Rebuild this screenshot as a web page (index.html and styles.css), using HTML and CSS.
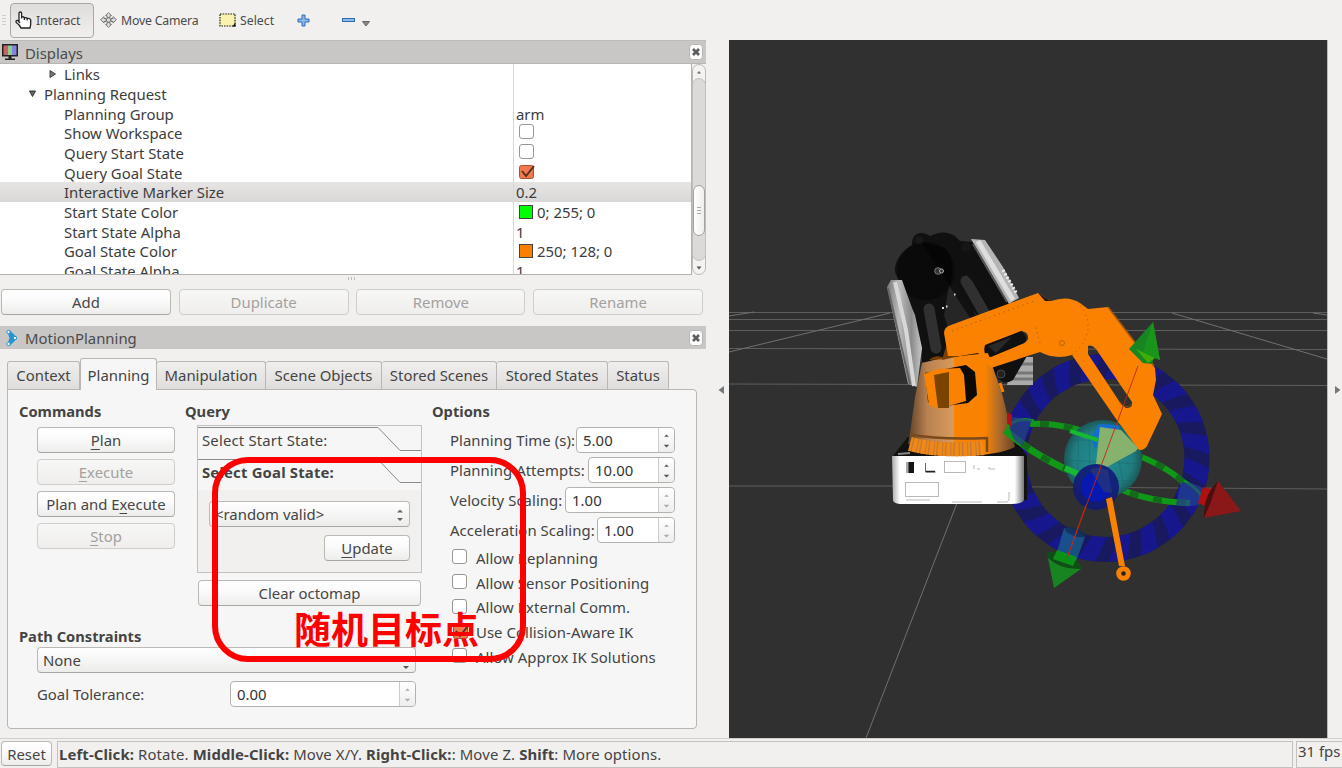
FILE: index.html
```html
<!DOCTYPE html>
<html lang="en">
<head>
<meta charset="utf-8">
<title>RViz MotionPlanning</title>
<link rel="stylesheet" href="styles.css">
</head>
<body>
<svg width="0" height="0" class="defs">
  <defs>
    <symbol id="check" viewBox="0 0 18 16"><rect x="1.500" y="1.500" width="14" height="13" rx="2" fill="#f07a50" stroke="#a8502f"/><path d="M4 7l4 5L16 2" fill="none" stroke="#5b2e1e" stroke-width="2"/></symbol>
    <symbol id="close" viewBox="0 0 14 16"><rect x=".5" y=".5" width="13" height="15" rx="3" fill="#fafafa" stroke="#b5b5b5"/><path d="M4 5l6 6M10 5l-6 6" stroke="#5c5c5c" stroke-width="2.600"/></symbol>
    <symbol id="updown" viewBox="0 0 14 24"><path d="M4.500 8.500L7 6l2.500 2.500zM4 17h6L7 20z" fill="currentColor"/></symbol>
  </defs>
</svg>
<div class="app">
  <header class="toolbar">
    <span class="grip"></span>
    <div class="tool active"><svg width="17" height="18" viewBox="0 0 17 18"><path d="M4 10.500V2.300a1.300 1.300 0 0 1 2.600 0V7.500V6q2.200-.8 2.800.8q2.200-.6 2.800.6q3-.4 3.500 1.600V13.500L15 17H6Q5 14 1.200 11.500Q.5 9 2.700 9.500L5 12M9.400 6.800V9M12.200 7.500V9.500" fill="#fff" stroke="#222" stroke-width="1.300"/></svg><span>Interact</span></div>
    <div class="tool camera"><svg width="17" height="16" viewBox="0 0 17 16"><g fill="#ddd" stroke="#777"><path d="M8.500 .7l3 3H10v2H7v-2H5.500zM8.500 15.300l-3-3H7v-2h3v2h1.500zM.6 7.500L4 4.700V6.500h2v3H4v1.600zM16.400 7.500L13 4.700V6.500h-2v3h2v1.600z"/><circle cx="8.500" cy="8" r="2.200"/></g></svg><span>Move Camera</span></div>
    <div class="tool select"><svg width="17" height="14" viewBox="0 0 17 14"><rect x="1" y="1" width="15" height="12" fill="#faf3ae" stroke="#222" stroke-width="1.200" stroke-dasharray="1.600 1"/><path d="M16.500 10v3.500H13z"/></svg><span>Select</span></div>
    <svg class="plus" width="13" height="13" viewBox="0 0 13 13"><path d="M5 1h3v4h4v3H8v4H5V8H1V5h4z" fill="#8db8ea" stroke="#2f6cb0"/></svg>
    <svg class="minus" width="28" height="13" viewBox="0 0 28 13"><rect x=".5" y="4.500" width="12" height="3" fill="#8db8ea" stroke="#2f6cb0"/><path d="M20.500 7.500h7l-3.500 4.500z" fill="#888" stroke="#666"/></svg>
  </header>
  <div class="main">
    <aside class="left">
      <div class="dock-title"><svg class="dicon" width="18" height="18" viewBox="0 0 18 18"><rect x="1" y="1" width="16" height="12.500" fill="#222"/><path d="M2.500 2.500h4.500v9.500H2.500z" fill="#c86464"/><path d="M7 2.500h4v9.500H7z" fill="#8ad08a"/><path d="M11 2.500h4.500v9.500H11z" fill="#8383e0"/><path d="M7.500 13h3v2.500h3.500v1.500H4v-1.500h3.500z" fill="#222"/></svg><span>Displays</span><svg class="x" width="14" height="16"><use href="#close"/></svg></div>
      <div class="tree-wrap">
        <div class="tree">
          <div class="row"><span class="k d2"><svg class="tri" width="8" height="10"><path d="M1 1.500L6.500 5L1 8.500z" fill="#777" stroke="#444"/></svg>Links</span><span class="v"></span></div>
          <div class="row"><span class="k d1"><svg class="tri t2" width="10" height="8"><path d="M1.500 1h6L4.500 6.500z" fill="#666" stroke="#333"/></svg>Planning Request</span><span class="v"></span></div>
          <div class="row"><span class="k d2">Planning Group</span><span class="v">arm</span></div>
          <div class="row"><span class="k d2">Show Workspace</span><span class="v"><i class="cb"></i></span></div>
          <div class="row"><span class="k d2">Query Start State</span><span class="v"><i class="cb"></i></span></div>
          <div class="row"><span class="k d2">Query Goal State</span><span class="v"><svg class="ck" width="18" height="16"><use href="#check"/></svg></span></div>
          <div class="row sel"><span class="k d2">Interactive Marker Size</span><span class="v">0.2</span></div>
          <div class="row"><span class="k d2">Start State Color</span><span class="v"><i class="sw green"></i>0; 255; 0</span></div>
          <div class="row"><span class="k d2">Start State Alpha</span><span class="v">1</span></div>
          <div class="row"><span class="k d2">Goal State Color</span><span class="v"><i class="sw orange"></i>250; 128; 0</span></div>
          <div class="row"><span class="k d2">Goal State Alpha</span><span class="v">1</span></div>
        </div>
        <div class="scroll"><svg width="14" height="14"><path d="M5 8.500L7 6l2 2.500z" fill="#666"/></svg><div class="track"><div class="thumb"><b></b><b></b><b></b></div></div><svg width="14" height="14"><path d="M4.500 5.500h5L7 8.500z" fill="#555"/></svg></div>
      </div>
      <div class="hsplit"><i></i></div>
      <div class="actions"><button class="btn">Add</button><button class="btn off">Duplicate</button><button class="btn off">Remove</button><button class="btn off">Rename</button></div>
      <div class="dock-title second"><svg class="dicon" width="18" height="18" viewBox="0 0 18 18"><path d="M8 2.500L14.500 9L8 15.500L10 9z" fill="#2994d0" stroke="#2994d0" stroke-width="3" stroke-linejoin="round"/><g fill="#fff" stroke="#2994d0"><circle cx="7.500" cy="3" r="1.700"/><circle cx="14" cy="9" r="1.700"/><circle cx="7.500" cy="15" r="1.700"/></g></svg><span>MotionPlanning</span><svg class="x" width="14" height="16"><use href="#close"/></svg></div>
      <nav class="tabs"><span class="tab t-ctx">Context</span><span class="tab on">Planning</span><span class="tab t-man">Manipulation</span><span class="tab t-obj">Scene Objects</span><span class="tab t-scn">Stored Scenes</span><span class="tab t-sta">Stored States</span><span class="tab t-st">Status</span></nav>
      <section class="pane">
        <div class="cols">
          <div class="commands"><h3>Commands</h3><div class="stack"><button class="btn"><u>P</u>lan</button><button class="btn off"><u>E</u>xecute</button><button class="btn">Plan and E<u>x</u>ecute</button><button class="btn off"><u>S</u>top</button></div></div>
          <div class="query"><h3>Query</h3>
            <div class="toolbox">
              <div class="page-tab first"><svg width="223" height="32"><path d="M0 1.500H180L202 24.500H223" fill="none" stroke="#8c8986"/></svg><span>Select Start State:</span></div>
              <div class="page-tab"><svg width="223" height="32"><path d="M0 1.500H180L202 24.500H223" fill="none" stroke="#8c8986"/></svg><span class="goal">Select Goal State:</span></div>
              <div class="page"><div class="combo">&lt;random valid&gt;<svg width="14" height="24"><path d="M4 10.500L7 7.500l3 3zM4 16h6L7 19z" fill="#666"/></svg></div><button class="btn update"><u>U</u>pdate</button></div>
            </div>
            <button class="btn octo">Clear octomap</button>
          </div>
          <div class="options"><h3>Options</h3>
            <div class="opt"><label>Planning Time (s):</label><div class="spin"><span>5.00</span><svg width="14" height="24"><use href="#updown"/></svg></div></div>
            <div class="opt"><label>Planning Attempts:</label><div class="spin s2"><span>10.00</span><svg width="14" height="24"><use href="#updown"/></svg></div></div>
            <div class="opt"><label>Velocity Scaling:</label><div class="spin s3 dim"><span>1.00</span><svg width="14" height="24"><use href="#updown"/></svg></div></div>
            <div class="opt"><label>Acceleration Scaling:</label><div class="spin s4 dim"><span>1.00</span><svg width="14" height="24"><use href="#updown"/></svg></div></div>
            <div class="checks">
              <div><i class="cb"></i><span>Allow Replanning</span></div>
              <div><i class="cb"></i><span>Allow Sensor Positioning</span></div>
              <div><i class="cb"></i><span>Allow External Comm.</span></div>
              <div><svg class="ck" width="18" height="16"><use href="#check"/></svg><span>Use Collision-Aware IK</span></div>
              <div><i class="cb"></i><span>Allow Approx IK Solutions</span></div>
            </div>
          </div>
        </div>
        <div class="path"><h3>Path Constraints</h3><div class="combo none">None<svg width="14" height="24"><path d="M4 18h6L7 21z" fill="#555"/></svg></div>
          <div class="tol"><label>Goal Tolerance:</label><div class="spin dim"><span>0.00</span><svg width="14" height="24"><use href="#updown"/></svg></div></div></div>
      </section>
    </aside>
    <div class="vsplit"><svg width="8" height="10"><path d="M7 1v8L1.500 5z" fill="#777"/></svg></div>
    <svg class="scene" width="598" height="698" viewBox="729 40 598 698">
      <defs>
        <linearGradient id="cone"><stop offset="0" stop-color="#5e4128"/><stop offset=".18" stop-color="#b98252"/><stop offset=".43" stop-color="#d99a5e"/><stop offset=".435" stop-color="#f98300"/><stop offset=".72" stop-color="#fa8200"/><stop offset=".85" stop-color="#b06c2c"/><stop offset="1" stop-color="#654325"/></linearGradient>
        <linearGradient id="box"><stop offset="0" stop-color="#aaa"/><stop offset=".06" stop-color="#fff"/><stop offset=".93" stop-color="#fff"/><stop offset="1" stop-color="#777"/></linearGradient>
        <linearGradient id="panel"><stop offset="0" stop-color="#777"/><stop offset=".35" stop-color="#bbb"/><stop offset=".7" stop-color="#8b8b8b"/><stop offset="1" stop-color="#c8c8c8"/></linearGradient>
        <radialGradient id="ball"><stop offset="0" stop-color="#238f94"/><stop offset=".75" stop-color="#207d80"/><stop offset="1" stop-color="#1c5858"/></radialGradient>
      </defs>
      <rect x="729" y="40" width="598" height="698" fill="#303030"/>
      <g stroke="#5e5e5e" fill="none"><path d="M729 312.500H1327M729 319.500H1327M729 330.500H1327M729 348.500L1327 349.500M729 384L1327 385.500M729 486H900L1327 489"/><path d="M729 316L754 312M729 352L890 313M1172 313L1327 359M1313 313l14 2M957 503L866 738" stroke="#707070"/></g>
      <!-- rotation ring -->
      <g fill="none" stroke="#17178f">
        <circle cx="1105.500" cy="458" r="91.500" stroke="#191960" stroke-width="25"/>
        <g stroke-width="3.200" stroke-dasharray="10 8"><circle pathLength="360" cx="1105.500" cy="458" r="80.600"/><circle pathLength="360" cx="1105.500" cy="458" r="83.700" stroke-dashoffset="-.8"/><circle pathLength="360" cx="1105.500" cy="458" r="86.800" stroke-dashoffset="-1.600"/><circle pathLength="360" cx="1105.500" cy="458" r="89.900" stroke-dashoffset="-2.400"/><circle pathLength="360" cx="1105.500" cy="458" r="93" stroke-dashoffset="-3.200"/><circle pathLength="360" cx="1105.500" cy="458" r="96.100" stroke-dashoffset="-4"/><circle pathLength="360" cx="1105.500" cy="458" r="99.200" stroke-dashoffset="-4.800"/><circle pathLength="360" cx="1105.500" cy="458" r="102.300" stroke-dashoffset="-5.600"/></g>
      </g>
      <!-- upper links -->
      <path d="M1012 357h21v28h-26z" fill="#aaa"/><path d="M1014 364h19M1014 373h19M1012 379h21" stroke="#777" stroke-width="3"/>
      <path d="M902 281Q894 276 895 268Q897 254 912 245Q911 235 920 233Q926 233 930 236Q944 229 955 236L960 241L973 242L1018 305L1027 356L1013 380Q1003 387 995 374L985 365L922 362L922 348L912 308z" fill="#101010"/>
      <circle cx="926" cy="271" r="29" fill="#0a0a0a"/><path d="M921 242L950 285Q956 262 945 248z" fill="#050505"/>
      <path d="M949 286L944 315L948 328L980 318z" fill="#262626"/>
      <path d="M929 309L936 348M966 281L987 318" stroke="#303030" stroke-width="11" stroke-linecap="round"/>
      <path d="M953 286L975 320M963 267L1000 306" stroke="#111" stroke-width="6"/>
      <circle cx="919" cy="240" r="4" fill="#181818"/><circle cx="966" cy="247" r="5" fill="#161616"/>
      <path d="M887 287L891 280L902 280L912 308L915 315L922 348L917 387L908 384z" fill="url(#panel)"/>
      <path d="M895 282L906 330L914 386" stroke="#d8d8d8" stroke-width="4" fill="none"/><path d="M888 288L910 384" stroke="#666" stroke-width="2"/>
      <path d="M971 239L985 240L1003 267L1019 298L1009 304z" fill="#b5b5b5"/><path d="M978 241L1013 300" stroke="#dedede" stroke-width="5"/><path d="M973 244L1007 302" stroke="#555" stroke-width="2"/>
      <path d="M1003 270L1017 294" stroke="#eee" stroke-width="3" stroke-dasharray="2 2"/>
      <circle cx="938" cy="271" r="3.300" fill="#333" stroke="#777"/><circle cx="941.500" cy="271" r="2" fill="#333" stroke="#aaa"/><path d="M942 308h2M946 306.500h1.500M954 294.500h1.500" stroke="#ddd" stroke-width="2"/>
      <circle cx="1001" cy="374" r="4" fill="#222" stroke="#484848"/>
      <!-- base box -->
      <path d="M892 457L908 437H1014L1027 456V500H900z" fill="#111"/>
      <path d="M892 456H1024V500Q1022 504 1012 504H900Q893 503 893 500z" fill="url(#box)"/>
      <g fill="none" stroke="#aaa" stroke-width=".8"><rect x="944.500" y="461.500" width="21" height="11"/><rect x="905.500" y="482.500" width="33" height="14"/><path d="M974 465v4M977 469h3M989 467v2h6M1009 492v8l-2 2h-10M906 500h24M952 502h30"/></g>
      <path d="M906 462h8v11h-8z" fill="#151515"/><path d="M906 462h2.500v11h-2.500z" fill="#aaa"/><path d="M925.500 463v9h10" fill="none" stroke="#666"/><path d="M926 471.500h9" stroke="#222" stroke-width="1.500"/>
      <path d="M898 454l12-1" stroke="#888" stroke-width="2"/>
      <!-- turret -->
      <path d="M922 363L942 358L988 353L1003 397L1015 447Q990 459 935 454L908 444L910 433L915 397z" fill="url(#cone)"/>
      <path d="M910 444Q940 452 984 448" stroke="#c57a30" stroke-width="14" fill="none"/><path d="M910 444Q940 452 984 448" stroke="#f08818" stroke-width="14" stroke-dasharray="2 1.400 4 1" fill="none"/>
      <path d="M910 434.500Q940 440 987 438V452" stroke="#7a4a1b" stroke-width="2.500" fill="none"/>
      <path d="M925 373L966 365L975 372L977 395L968 403L938 407L928 402z" fill="#0c0a06"/>
      <path d="M924 374L937 369L960 368L964 375L966 401L938 409L929 405z" fill="#f98300"/><path d="M934 375L949 372V408L938 408L935 385z" fill="#7a4400"/>
      <path d="M942 360L948 340L954 339L960 356z" fill="#7a3f03"/><path d="M929 360q8-7 17-1z" fill="#7a3f03"/><circle cx="950" cy="345" r="1.500" fill="#ddd"/>
      <path d="M1000 383l3 9" stroke="#fa8200" stroke-width="3"/>
      <!-- goal arm -->
      <path fill-rule="evenodd" fill="#fa8200" d="M948 356L944 333Q944 327 951 325L1038 293L1051 301Q1068 295 1080 303L1088 309L1108 307L1155 368L1156 380L1153 395L1162 414L1147 446Q1142 452 1136 448L1072 355Q1055 360 1040 352L991 368L978 353L960 356zM985 345L1021 331Q1029 332 1028 339Q1026 343 1022 344L991 357Q982 356 985 345zM1088 346Q1092 344 1096 349L1132 402Q1133 408 1126 408Q1122 405 1119 401L1088 354z"/>
      <path d="M985 346L1021 332Q1027 334 1026 341L991 356Z" fill="#111"/><path d="M988 346L1012 337L996 353z" fill="#292929"/>
      <path d="M1038 293l13 8h-6z" fill="#2b1909"/><path d="M1108 307L1133 340L1154 366" stroke="#a85a0a" stroke-width="1.500" fill="none"/>
      <path d="M952 331L1034 301M1040 343L1035 325M1072 355Q1085 345 1088 330Q1089 315 1080 306" stroke="#9f5608" stroke-dasharray="1 4" fill="none"/><circle cx="1062" cy="343" r="2.500" fill="none" stroke="#b96507"/>
      <path d="M1119 401q6 10 13 3" stroke="#8a4a05" fill="none"/>
      <!-- interactive handles -->
      <g fill="none" stroke="#119819" stroke-width="6"><path d="M1030 424Q1062 422 1100 437M1134 454Q1166 466 1183 482M1120 489Q1150 502 1190 503"/><path d="M1005 430Q1038 459 1078 474" stroke-width="7"/><path d="M1007 427Q1018 416 1034 421" stroke-width="3"/><path d="M1183 480Q1206 494 1200 500" stroke-width="3"/></g>
      <g fill="none" stroke="#136b19" stroke-width="6" stroke-dasharray="9 15"><path d="M1040 424Q1065 424 1100 437M1134 454Q1166 466 1183 482M1130 493Q1150 501 1190 503M1022 443Q1045 462 1078 474"/></g>
      <path d="M1008 416l24 4-9 25q-8-1-12-12z" fill="#25418a" opacity=".75"/><path d="M1007 412l5 3-1 12-4-4z" fill="#b51018"/>
      <circle cx="1103" cy="459" r="39" fill="url(#ball)"/>
      <path d="M1079 426L1077 496M1089 421L1090 495M1111 420L1125 492M1068 440H1105M1065 460L1140 464M1070 479L1132 481" stroke="#156568" opacity=".4"/>
      <path d="M1117 420L1130 418L1148 430L1147 446Q1142 452 1138 449z" fill="#fa8200"/>
      <path d="M1090 438L1099 424L1118 425L1120 430L1100 428L1096 450z" fill="#126fd0"/>
      <path d="M1070 431L1098 440" stroke="#17b833" stroke-width="4"/><path d="M1065 468L1078 474" stroke="#17b833" stroke-width="6"/>
      <path d="M1100 427L1121 430L1138 448L1136 451L1107 467L1096 464z" fill="#86b26e"/>
      <circle cx="1096" cy="487" r="23" fill="#121b76" fill-opacity=".92"/><circle cx="1096" cy="487" r="15" fill="#0719b0"/>
      <path d="M1090 470q7-5 18 0l4 23-8-1z" fill="#27357c" opacity=".8"/>
      <path d="M1106 499L1112 497L1125 566H1119z" fill="#fa8200"/><circle cx="1123.500" cy="573.500" r="4.800" fill="#222" stroke="#fa8200" stroke-width="5"/>
      <path d="M1064 528Q1074 527 1085 537L1074 567L1054 562z" fill="#185a89" opacity=".85"/><ellipse cx="1075" cy="532" rx="11" ry="4" transform="rotate(20 1075 532)" fill="#152c55" opacity=".8"/>
      <ellipse cx="1064" cy="561" rx="19" ry="6" transform="rotate(23 1064 561)" fill="#114d17"/><path d="M1048 558Q1061 570 1081 569L1054 588z" fill="#178421"/><path d="M1057 550L1077 557L1073 566L1053 559z" fill="#0c9918" opacity=".9"/>
      <path d="M1153 322L1129 349L1143 363L1152 364L1154 358L1160 360z" fill="#178521"/><path d="M1153 322L1143 352L1160 360z" fill="#1b941d"/><path d="M1136 349l19 9-7 5z" fill="#41ac08"/>
      <path d="M1181 482Q1192 482 1203 488L1201 504Q1189 508 1176 505z" fill="#234491" opacity=".7"/><path d="M1203 487L1216 490L1211 508L1198 503z" fill="#b01010"/><path d="M1218 481L1241 511L1204 518z" fill="#8a1818"/><path d="M1218 481L1210 504L1204 518Q1203 495 1218 481" fill="#4a1010"/>
      <path d="M1138 366L1067 558M1086 505L1067 558" stroke="#c32714" stroke-width=".9"/>
    </svg>
    <div class="vsplit right"><svg width="8" height="10"><path d="M1 1v8L6.500 5z" fill="#777"/></svg></div>
  </div>
  <footer class="status"><button class="btn reset">Reset</button><div class="msg"><b>Left-Click:</b> Rotate. <b>Middle-Click:</b> Move X/Y. <b>Right-Click:</b>: Move Z. <b>Shift</b>: More options.</div><div class="fps">31 fps</div></footer>
  <div class="callout"><span>随机目标点</span></div>
</div>
</body>
</html>
```

FILE: styles.css
```css
* { box-sizing: border-box; }
body { margin: 0; width: 1342px; height: 768px; overflow: hidden; background: #f1f0ee; color: #444; font: 14.9px/20px "Noto Sans", "Open Sans", sans-serif; }
.defs { position: absolute; }
.app { position: relative; display: flex; flex-direction: column; width: 1342px; height: 768px; }
button, h3 { font: inherit; color: inherit; letter-spacing: inherit; margin: 0; }
svg { display: block; flex: none; }
.toolbar { height: 40px; display: flex; align-items: center; font-size: 12.3px; letter-spacing: -.2px; color: #4a4a4a; }
.grip { width: 4px; height: 10px; margin: 0 4px 0 2px; background: repeating-linear-gradient(#ccc 0 1px, transparent 1px 3px); }
.tool { display: flex; align-items: center; gap: 4px; white-space: nowrap; }
.tool.active { width: 84px; height: 35px; padding-left: 4px; border: 1px solid #aaa6a2; border-radius: 4px; background: linear-gradient(#dfdddb, #f1f0ee); }
.active span { padding-top: 2px; letter-spacing: -.1px; }
.camera { margin-left: 6px; width: 113px; }
.camera span, .select span { padding-top: 1px; }
.select { margin-left: 6px; width: 60px; letter-spacing: 0; }
.plus { margin-left: 18px; }
.minus { margin-left: 32px; }
.main { display: flex; height: 698px; }
.left { width: 706px; display: flex; flex-direction: column; }
.dock-title { height: 24px; flex: none; display: flex; align-items: center; padding: 0 3px 0 1px; background: #c8c7c6; border-top: 1px solid #bdbcbb; border-bottom: 1px solid #b8b6b4; color: #4b4b4b; }
.dock-title span { margin-left: 6px; padding-top: 1px; }
.dock-title .x { margin-left: auto; }
.second { margin-top: 11px; height: 23px; border-bottom: 0; border-top: 0; }
.tree-wrap { height: 211px; display: flex; }
.tree { width: 692px; height: 211px; padding-top: .3px; overflow: hidden; background: #fff; border-right: 1px solid #b5b2ae; border-bottom: 1px solid #b5b2ae; color: #3c3c3c; }
.row { height: 19.7px; line-height: 20px; display: flex; }
.row.sel { background: linear-gradient(#e6e5e4, #d9d8d6); }
.k { width: 514px; border-right: 1px solid #d8d8d8; display: flex; align-items: center; white-space: nowrap; }
.d1 { padding-left: 44px; }
.d2 { padding-left: 64px; }
.tri { margin: 0 7px 0 -15px; }
.t2 { margin: 0 6px 0 -16px; }
.v { padding-left: 2px; display: flex; align-items: center; }
.cb { display: block; flex: none; width: 15px; height: 15px; border: 1px solid #9a9793; border-radius: 3px; background: #fff; }
.v .cb { margin: -3px 0 0 3px; }
.v .ck { margin: -2px 0 0 2px; }
.sw { width: 14px; height: 14px; border: 1px solid #444; margin: 0 4px 0 3px; }
.green { background: #0f0; }
.orange { background: #fa8000; }
.scroll { width: 14px; background: #f4f3f2; border: 1px solid #bcb9b5; border-radius: 7px; display: flex; flex-direction: column; align-items: center; }
.scroll svg { height: 13px; }
.track { flex: 1; width: 14px; padding-top: 106px; background: #dcdad8; border: 1px solid #c2bfbb; border-radius: 7px; }
.thumb { width: 12px; height: 51px; border-radius: 6px; border: 1px solid #a5a29e; background: linear-gradient(90deg, #fff, #efeeed); display: flex; flex-direction: column; align-items: center; justify-content: center; gap: 2px; }
.thumb b { width: 4px; height: 1px; background: #aaa; }
.hsplit { height: 14px; padding: 2px 0 0 348px; }
.hsplit i { display: block; width: 8px; height: 3px; background: repeating-linear-gradient(90deg, #bbb 0 1px, transparent 1px 3px); }
.btn { height: 26px; padding: 0; border: 1px solid #bcb9b5; border-bottom-color: #a9a6a2; border-radius: 4px; background: linear-gradient(#fff, #fbfbfb 40%, #ededec); text-align: center; line-height: 22px; color: #474747; white-space: nowrap; }
.btn.off { color: #a3a19f; border-color: #d0cecb; background: linear-gradient(#f7f7f6, #efeeed); }
u { text-underline-offset: 3px; text-decoration-thickness: 1px; }
.actions { display: grid; grid-template-columns: 170px 170px 169px 170px; gap: 7.7px; padding-left: 1px; }
.tabs { display: flex; align-items: flex-end; height: 40px; padding-left: 7px; flex: none; }
.tab { height: 28px; line-height: 27px; text-align: center; white-space: nowrap; border: 1px solid #bab7b3; border-left-width: 0; border-bottom: 0; border-radius: 3px 3px 0 0; background: linear-gradient(#f0efee, #dfdddb); }
.tab.on { width: 77px; height: 32px; line-height: 32px; margin-bottom: -1px; border-left-width: 1px; background: #f6f6f6; z-index: 1; }
.t-ctx { width: 73px; border-left-width: 1px; }
.t-man { width: 109px; }
.t-obj { width: 116px; }
.t-scn { width: 115px; }
.t-sta { width: 111px; }
.t-st { width: 61px; }
.pane { width: 690px; height: 340px; flex: none; margin-left: 7px; border: 1px solid #bab7b3; border-radius: 0 4px 4px 4px; background: #f6f6f6; padding: 11px 0 0 11px; }
h3 { font-weight: 700; font-size: 14.7px; line-height: 20px; white-space: nowrap; height: 20px; letter-spacing: 0; }
.cols { display: flex; height: 225px; }
.commands { width: 166px; }
.stack { display: flex; flex-direction: column; gap: 6px; padding: 6px 0 0 18px; width: 156px; }
.query { width: 247px; }
.toolbox { margin: 4px 0 0 12px; width: 225px; height: 148px; border: 1px solid #c3c1be; }
.page-tab { display: grid; height: 32px; white-space: nowrap; letter-spacing: .17px; }
.page-tab > * { grid-area: 1 / 1; }
.page-tab span { padding: 4px 0 0 4px; }
.page-tab .goal { font-weight: 700; }
.page { background: #f1f0ee; height: 82px; padding: 11px 11px 0; display: flex; flex-direction: column; }
.combo { height: 26px; border: 1px solid #bcb9b5; border-bottom-color: #a9a6a2; border-radius: 4px; background: linear-gradient(#fff, #ececeb); line-height: 24px; padding: 0 2px 0 5px; display: flex; justify-content: space-between; white-space: nowrap; }
.update { width: 86px; align-self: flex-end; margin-top: 8px; }
.octo { display: block; width: 223px; margin: 7px 0 0 13px; }
.options { width: 243px; letter-spacing: .05px; }
.opt { height: 30px; display: flex; align-items: center; justify-content: space-between; padding-left: 18px; white-space: nowrap; }
.options h3 { margin-bottom: 4px; }
.spin { width: 99px; height: 26px; display: flex; border: 1px solid #b5b2ae; border-radius: 4px; background: #fff; color: #333; }
.spin span { flex: 1; padding-left: 6px; line-height: 24px; }
.spin svg { width: 16px; padding: 0 1px; border-left: 1px solid #ccc; background: linear-gradient(#fff, #eee); color: #555; border-radius: 0 4px 4px 0; }
.dim svg { color: #aaa; }
.s2 { width: 87px; }
.s3 { width: 110px; }
.s4 { width: 78px; }
.checks { padding: .4px 0 0 20px; }
.checks div { height: 24.8px; display: flex; align-items: center; white-space: nowrap; }
.checks span { margin-left: 8px; }
.checks .cb { margin-top: -2px; margin-right: 1px; }
.checks .ck { margin-right: -2px; }
.path { width: 397px; }
.path .combo { margin: 1px 0 0 18px; }
.tol { display: flex; justify-content: space-between; align-items: center; padding: 8px 0 0 18px; }
.tol .spin { width: 186px; }
.vsplit { width: 23px; padding: 345px 0 0 11px; flex: none; }
.vsplit.right { width: 15px; padding-left: 6px; border-left: 1px solid #bbb; }
.status { height: 30px; border-top: 1px solid #d0cfcd; display: flex; padding: 2px 0 0 1px; white-space: nowrap; }
.reset { width: 51px; height: 25px; flex: none; }
.msg { width: 1236px; flex: none; margin-left: 5px; height: 27px; border: 1px solid #c4c1be; padding-left: 1px; line-height: 24px; letter-spacing: .12px; }
.fps { margin-left: 3px; width: 50px; flex: none; border: 1px solid #c4c1be; padding: 0 0 0 1px; line-height: 18px; height: 27px; }
.callout { position: absolute; left: 212px; top: 457px; width: 314px; height: 205px; border: 6px solid #fe0000; border-radius: 36px; color: #fe0000; font: 700 37px/40px "Noto Sans CJK SC", sans-serif; letter-spacing: 0; padding: 145px 0 0 76px; white-space: nowrap; }
```
